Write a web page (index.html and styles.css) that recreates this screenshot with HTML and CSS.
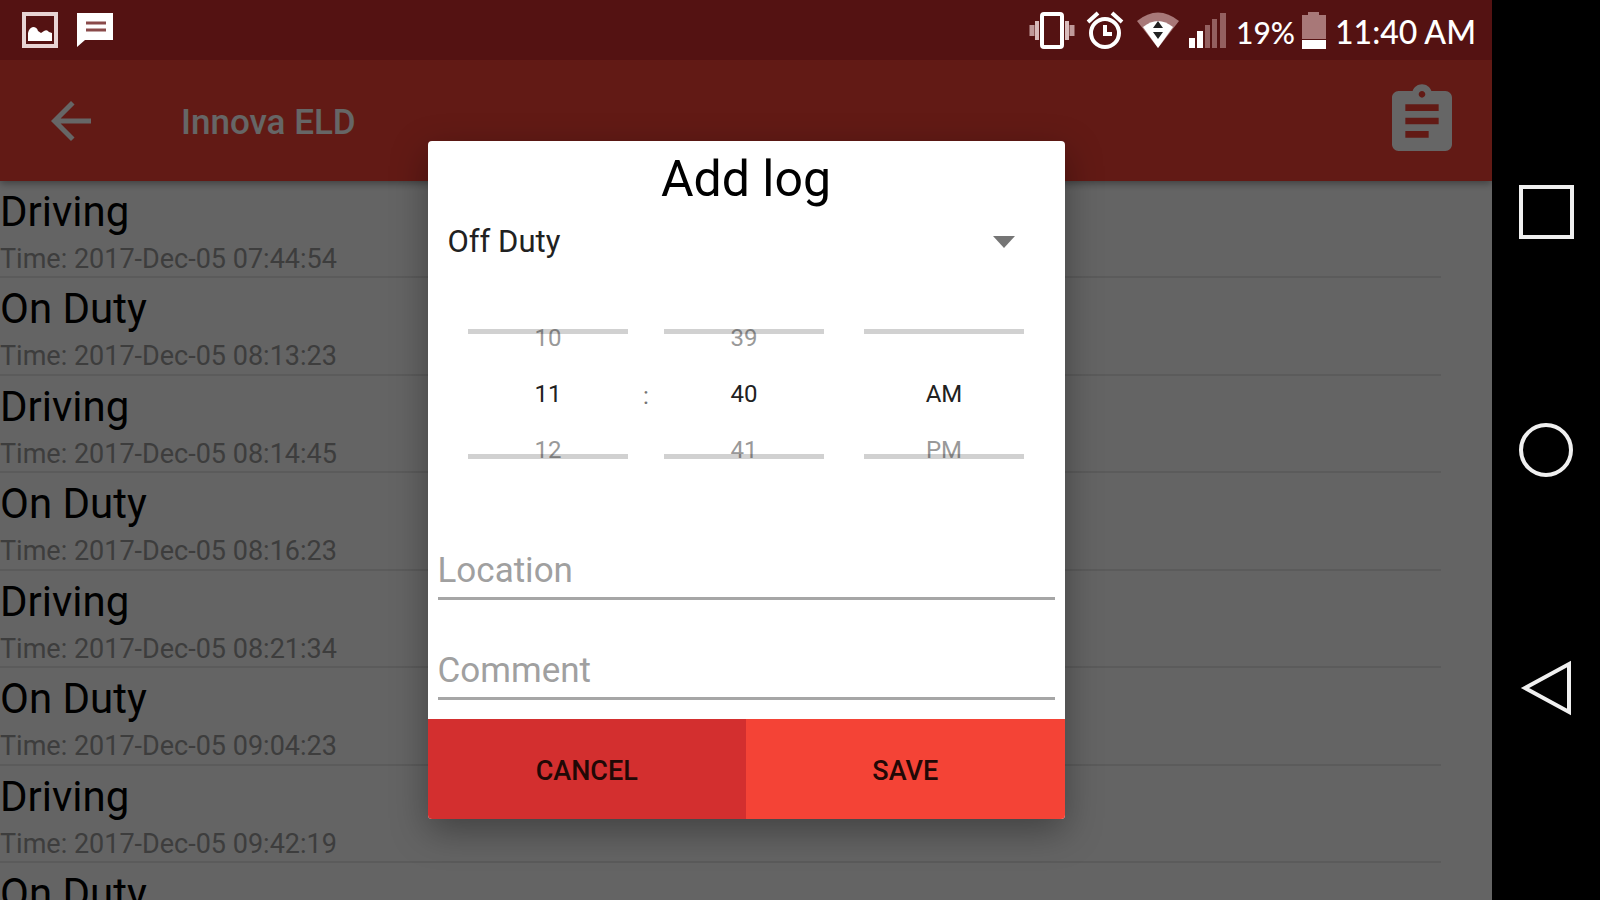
FILE: index.html
```html
<!DOCTYPE html>
<html lang="en">
<head>
    <meta charset="UTF-8">
    <meta name="viewport" content="width=device-width, initial-scale=1.0">
    <title>Innova ELD - Add log</title>
    <link rel="stylesheet" href="styles.css">
</head>
<body>
    <div class="screen">
        <!-- Status Bar -->
        <div class="status-bar">
            <div class="notifications">
                <svg width="36" height="36" viewBox="0 0 36 36" aria-hidden="true">
                    <rect x="2" y="2" width="32" height="32" fill="none" stroke="#e8d4d4" stroke-width="4"/>
                    <path d="M6 29V21q1-5 5-6 4 0 5 4l3 2 3-2q3-2 5 1l3 1v8z" fill="#fff"/>
                </svg>
                <svg width="38" height="36" viewBox="0 0 38 36" aria-hidden="true">
                    <path d="M1 1h36v27H9l-8 7z" fill="#fff"/>
                    <path d="M10 11h20M10 18h20" stroke="#8a4a4a" stroke-width="3"/>
                </svg>
            </div>
            <div class="system-icons">
                <svg width="48" height="40" viewBox="0 0 48 40" aria-hidden="true">
                    <rect x="14" y="4" width="20" height="33" rx="2" fill="none" stroke="#fff" stroke-width="4"/>
                    <path d="M9 11v19M39 11v19" stroke="#d9bcbc" stroke-width="4"/>
                    <path d="M4 15v11M44 15v11" stroke="#c09a9a" stroke-width="5"/>
                </svg>
                <svg width="44" height="40" viewBox="0 0 44 40" aria-hidden="true">
                    <circle cx="21" cy="23" r="14" fill="none" stroke="#fff" stroke-width="4"/>
                    <path d="M4 12l10-9M38 12L28 3" stroke="#fff" stroke-width="4"/>
                    <path d="M21 15v9h7" fill="none" stroke="#fff" stroke-width="4"/>
                </svg>
                <svg width="44" height="40" viewBox="0 0 44 40" aria-hidden="true">
                    <path d="M1 11Q22-6 43 11L22 38z" fill="#a87878"/>
                    <path d="M7 17q15-12 30 0L22 38z" fill="#fff"/>
                    <path d="M22 11l5 7H17zM22 29l5-7H17z" fill="#222"/>
                </svg>
                <svg width="40" height="40" viewBox="0 0 40 40" aria-hidden="true">
                    <path d="M1 28h6v10H1zM9 21h6v17H9z" fill="#fff"/>
                    <path d="M17 15h5v23h-5zM24 9h5v29h-5zM32 3h6v35h-6z" fill="#946060"/>
                </svg>
                <span class="battery-level">19%</span>
                <svg width="26" height="40" viewBox="0 0 26 40" aria-hidden="true">
                    <path d="M1 5h6V2h11v3h7v24H1z" fill="#a87878"/>
                    <path d="M1 30h24v9H1z" fill="#fff"/>
                </svg>
                <span class="clock">11:40 AM</span>
            </div>
        </div>

        <div class="window">
            <!-- App Bar -->
            <div class="app-bar">
                <button class="icon-btn" type="button" aria-label="Back">
                    <svg width="60" height="60" viewBox="0 0 24 24"><path d="M20 11H7.83l5.59-5.59L12 4l-8 8 8 8 1.41-1.41L7.83 13H20v-2z"/></svg>
                </button>
                <h1>Innova ELD</h1>
                <button class="icon-btn" type="button" aria-label="Logs">
                    <svg width="80" height="80" viewBox="0 0 24 24"><path d="M19 3h-4.18C14.4 1.84 13.3 1 12 1c-1.3 0-2.4.84-2.82 2H5c-1.1 0-2 .9-2 2v14c0 1.1.9 2 2 2h14c1.1 0 2-.9 2-2V5c0-1.1-.9-2-2-2zm-7 0c.55 0 1 .45 1 1s-.45 1-1 1-1-.45-1-1 .45-1 1-1zm2 14H7v-2h7v2zm3-4H7v-2h10v2zm0-4H7V7h10v2z"/></svg>
                </button>
            </div>

            <!-- Log List -->
            <ul class="log-list">
                <li><strong>Driving</strong><span>Time: 2017-Dec-05 07:44:54</span></li>
                <li><strong>On Duty</strong><span>Time: 2017-Dec-05 08:13:23</span></li>
                <li><strong>Driving</strong><span>Time: 2017-Dec-05 08:14:45</span></li>
                <li><strong>On Duty</strong><span>Time: 2017-Dec-05 08:16:23</span></li>
                <li><strong>Driving</strong><span>Time: 2017-Dec-05 08:21:34</span></li>
                <li><strong>On Duty</strong><span>Time: 2017-Dec-05 09:04:23</span></li>
                <li><strong>Driving</strong><span>Time: 2017-Dec-05 09:42:19</span></li>
                <li><strong>On Duty</strong></li>
            </ul>

            <!-- Add Log Dialog -->
            <div class="scrim">
                <form class="dialog" role="dialog" aria-labelledby="dialogTitle">
                    <h2 id="dialogTitle">Add log</h2>
                    <div class="status-select">
                        <select aria-label="Duty status">
                            <option>Off Duty</option>
                            <option>On Duty</option>
                            <option>Driving</option>
                        </select>
                        <svg width="22" height="12" viewBox="0 0 22 12" aria-hidden="true"><path d="M0 0h22L11 12z" fill="#757575"/></svg>
                    </div>
                    <div class="time-picker">
                        <div class="wheel" aria-label="Hour">
                            <span>10</span>
                            <span class="selected">11</span>
                            <span>12</span>
                        </div>
                        <span class="colon">:</span>
                        <div class="wheel" aria-label="Minute">
                            <span>39</span>
                            <span class="selected">40</span>
                            <span>41</span>
                        </div>
                        <div class="wheel period" aria-label="AM or PM">
                            <span></span>
                            <span class="selected">AM</span>
                            <span>PM</span>
                        </div>
                    </div>
                    <div class="fields">
                        <input type="text" placeholder="Location" aria-label="Location">
                        <input type="text" placeholder="Comment" aria-label="Comment">
                    </div>
                    <div class="actions">
                        <button class="cancel-btn" type="button">CANCEL</button>
                        <button class="save-btn" type="button">SAVE</button>
                    </div>
                </form>
            </div>
        </div>
    </div>

    <!-- System Navigation -->
    <div class="nav-bar">
        <button type="button" aria-label="Recent apps">
            <svg width="56" height="56" viewBox="0 0 56 56"><rect x="3" y="3" width="51" height="50"/></svg>
        </button>
        <button type="button" aria-label="Home">
            <svg width="56" height="56" viewBox="0 0 56 56"><circle cx="28" cy="28" r="25"/></svg>
        </button>
        <button type="button" aria-label="Back">
            <svg width="56" height="56" viewBox="0 0 56 56"><path d="M51 4v48L7 28z"/></svg>
        </button>
    </div>
</body>
</html>
```

FILE: styles.css
```css
* {
    margin: 0;
    padding: 0;
    box-sizing: border-box;
}
:root {
    --primary-color: #F44336;
    --primary-dark: #D32F2F;
    --status-color: #541212;
    --light-bg: #FAFAFA;
    --scrim-bg: rgba(0, 0, 0, 0.6);
    --nav-width: 108px;
}
body {
    font-family: Roboto, Arial, sans-serif;
    background-color: #000;
    height: 100vh;
    display: flex;
    overflow: hidden;
}
button {
    border: none;
    background: none;
    font-family: inherit;
    cursor: pointer;
}
svg {
    display: block;
}
.screen {
    flex: 1;
    min-width: 0;
    display: flex;
    flex-direction: column;
}
/* Status Bar */
.status-bar {
    height: 60px;
    flex-shrink: 0;
    padding: 0 16px 0 22px;
    background: var(--status-color);
    color: #fff;
    display: flex;
    align-items: center;
    justify-content: space-between;
}
.notifications {
    display: flex;
    gap: 18px;
}
.system-icons {
    display: flex;
    align-items: center;
    gap: 6px;
    font-family: Lato, sans-serif;
    font-size: 32px;
    font-weight: 500;
    white-space: nowrap;
}
.system-icons svg {
    margin-right: 2px;
}
.system-icons span {
    padding-top: 3px;
}
.system-icons .battery-level {
    font-size: 30px;
}
/* App Window */
.window {
    flex: 1;
    min-height: 0;
    position: relative;
    display: flex;
    flex-direction: column;
    background: var(--light-bg);
    overflow: hidden;
}
.app-bar {
    height: 121px;
    flex-shrink: 0;
    padding: 0 30px 0 41px;
    display: flex;
    align-items: center;
    background: var(--primary-color);
    color: #fff;
    box-shadow: 0 2px 8px rgba(0, 0, 0, 0.4);
}
.app-bar h1 {
    flex: 1;
    margin-left: 80px;
    padding-top: 3px;
    font-size: 35px;
    font-weight: 500;
}
.icon-btn svg {
    fill: #fff;
}
/* Log List */
.log-list {
    list-style: none;
    margin-right: 51px;
}
.log-list li {
    height: 98px;
    padding-top: 6px;
    border-bottom: 2px solid #E4E4E4;
}
.log-list li:nth-child(odd) {
    height: 97px;
}
.log-list strong,
.log-list span {
    display: block;
}
.log-list strong {
    font-size: 42px;
    font-weight: 400;
    line-height: 50px;
    color: #000;
}
.log-list span {
    margin-top: 6px;
    font-size: 27px;
    line-height: 32px;
    color: #999;
}
/* Add Log Dialog */
.scrim {
    position: absolute;
    inset: 0;
    display: flex;
    align-items: center;
    justify-content: center;
    background: var(--scrim-bg);
}
.dialog {
    width: 637px;
    max-width: 90%;
    background: #fff;
    border-radius: 4px;
    overflow: hidden;
    box-shadow: 0 12px 36px rgba(0, 0, 0, 0.35);
}
.dialog h2 {
    font-size: 50px;
    font-weight: 400;
    line-height: 76px;
    text-align: center;
}
.status-select {
    display: flex;
    align-items: center;
    padding: 0 50px 0 20px;
}
.status-select select {
    flex: 1;
    height: 49px;
    appearance: none;
    border: none;
    background: none;
    font-family: inherit;
    font-size: 31px;
    color: #212121;
}
.time-picker {
    display: flex;
    justify-content: center;
    align-items: center;
    margin-top: 44px;
    font-size: 24px;
    line-height: 56px;
    text-align: center;
    color: #999;
}
.wheel {
    width: 160px;
    position: relative;
}
.wheel span {
    display: block;
    height: 56px;
}
.wheel .selected {
    color: #212121;
}
/* divider rules drawn over the wheel values */
.wheel::before,
.wheel::after {
    content: "";
    position: absolute;
    left: 0;
    right: 0;
    height: 5px;
    background: rgba(0, 0, 0, 0.18);
}
.wheel::before {
    top: 19px;
}
.wheel::after {
    bottom: 19px;
}
.wheel.period {
    margin-left: 40px;
}
.colon {
    width: 36px;
    padding-top: 4px;
    color: #757575;
}
.fields {
    display: flex;
    flex-direction: column;
    gap: 43px;
    padding: 65px 10px 19px;
}
.fields input {
    width: 100%;
    height: 57px;
    border: none;
    border-bottom: 3px solid #A6A6A6;
    font-family: inherit;
    font-size: 35px;
    outline: none;
}
.fields input::placeholder {
    color: #A0A0A0;
}
.actions {
    display: flex;
}
.actions button {
    flex: 1;
    height: 100px;
    padding-top: 4px;
    font-size: 27px;
    font-weight: 500;
    color: #210806;
}
.cancel-btn {
    background: var(--primary-dark);
}
.save-btn {
    background: var(--primary-color);
}
/* System Navigation */
.nav-bar {
    width: var(--nav-width);
    display: flex;
    flex-direction: column;
    align-items: center;
    justify-content: center;
    gap: 182px;
    background: #000;
}
.nav-bar svg {
    fill: none;
    stroke: #F0F0F0;
    stroke-width: 4;
}
```
